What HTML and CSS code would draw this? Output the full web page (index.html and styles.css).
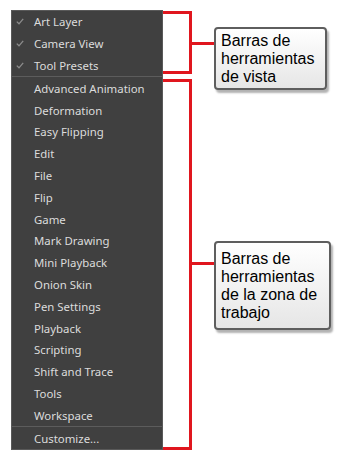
FILE: index.html
```html
<!DOCTYPE html>
<html lang="es">
  <head>
    <meta charset="UTF-8" />
    <meta name="viewport" content="width=device-width, initial-scale=1.0" />
    <title>Barras de herramientas</title>
    <link rel="stylesheet" href="styles.css">
  </head>
  <body>
    <div class="figure">
      <ul class="menu">
        <li class="menu-item checked"><span class="check"><svg width="8" height="7" viewBox="0 0 8 7"><path d="M0.8 3.6 L3 5.8 L7.2 0.8" fill="none" stroke="#8c8c8c" stroke-width="1.3"/></svg></span>Art Layer</li>
        <li class="menu-item checked"><span class="check"><svg width="8" height="7" viewBox="0 0 8 7"><path d="M0.8 3.6 L3 5.8 L7.2 0.8" fill="none" stroke="#8c8c8c" stroke-width="1.3"/></svg></span>Camera View</li>
        <li class="menu-item checked"><span class="check"><svg width="8" height="7" viewBox="0 0 8 7"><path d="M0.8 3.6 L3 5.8 L7.2 0.8" fill="none" stroke="#8c8c8c" stroke-width="1.3"/></svg></span>Tool Presets</li>
        <li class="separator"></li>
        <li class="menu-item"><span class="check"></span>Advanced Animation</li>
        <li class="menu-item"><span class="check"></span>Deformation</li>
        <li class="menu-item"><span class="check"></span>Easy Flipping</li>
        <li class="menu-item"><span class="check"></span>Edit</li>
        <li class="menu-item"><span class="check"></span>File</li>
        <li class="menu-item"><span class="check"></span>Flip</li>
        <li class="menu-item"><span class="check"></span>Game</li>
        <li class="menu-item"><span class="check"></span>Mark Drawing</li>
        <li class="menu-item"><span class="check"></span>Mini Playback</li>
        <li class="menu-item"><span class="check"></span>Onion Skin</li>
        <li class="menu-item"><span class="check"></span>Pen Settings</li>
        <li class="menu-item"><span class="check"></span>Playback</li>
        <li class="menu-item"><span class="check"></span>Scripting</li>
        <li class="menu-item"><span class="check"></span>Shift and Trace</li>
        <li class="menu-item"><span class="check"></span>Tools</li>
        <li class="menu-item"><span class="check"></span>Workspace</li>
        <li class="separator"></li>
        <li class="menu-item"><span class="check"></span>Customize...</li>
      </ul>

      <!-- callout: view toolbars -->
      <div class="bracket bracket-view"></div>
      <div class="connector connector-view"></div>
      <div class="callout callout-view">Barras de<br>herramientas<br>de vista</div>

      <!-- callout: workspace toolbars -->
      <div class="bracket bracket-work"></div>
      <div class="connector connector-work"></div>
      <div class="callout callout-work">Barras de<br>herramientas<br>de la zona de<br>trabajo</div>
    </div>
  </body>
</html>
```

FILE: styles.css
```css
body {
  margin: 0;
  background: #ffffff;
}

.figure {
  position: relative;
  width: 344px;
  height: 461px;
  overflow: hidden;
  padding: 10px 0 0 11px;
  box-sizing: border-box;
}

.menu {
  list-style: none;
  margin: 0;
  padding: 0;
  width: 150px;
  background: #404040;
  border: 1px solid #595959;
  font-family: "Noto Sans", sans-serif;
  font-size: 11.4px;
  color: #dcdcdc;
}

.menu-item {
  display: flex;
  align-items: center;
  height: 21.8px;
  white-space: nowrap;
}

.check {
  display: flex;
  align-items: center;
  justify-content: center;
  width: 12px;
  margin: 0 8px 0 2px;
}

.separator {
  height: 1px;
  background: #5c5c5c;
}

/* red brackets */
.bracket {
  position: absolute;
  left: 163px;
  width: 26px;
  border: 3px solid #e0161e;
  border-left: none;
}
.bracket-view {
  top: 11px;
  height: 57px;
}
.bracket-work {
  top: 79px;
  height: 365px;
}

.connector {
  position: absolute;
  left: 191px;
  width: 23px;
  height: 3px;
  background: #e0161e;
}
.connector-view {
  top: 42px;
}
.connector-work {
  top: 262px;
}

/* callout boxes */
.callout {
  position: absolute;
  left: 214px;
  border: 2px solid #5e5e5e;
  border-radius: 4px;
  background: linear-gradient(#ffffff, #e6e6e6);
  box-shadow: 2px 3px 2px rgba(0, 0, 0, 0.3);
  font-family: "Liberation Sans", Arial, sans-serif;
  font-size: 16px;
  line-height: 18px;
  color: #000000;
  padding-left: 5px;
  box-sizing: border-box;
}
.callout-view {
  top: 27px;
  width: 113px;
  height: 63px;
  padding-top: 3px;
}
.callout-work {
  top: 241px;
  width: 117px;
  height: 89px;
  padding-top: 7px;
}
```
